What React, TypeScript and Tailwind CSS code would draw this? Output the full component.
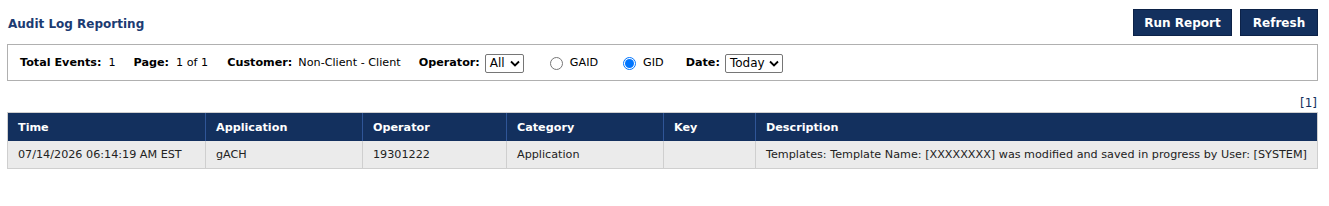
import React from "react";

const cols = [
  { name: "Time", w: "w-[197px]" },
  { name: "Application", w: "w-[157px]" },
  { name: "Operator", w: "w-[144px]" },
  { name: "Category", w: "w-[157px]" },
  { name: "Key", w: "w-[92px]" },
  { name: "Description", w: "" },
];

const row = [
  "07/14/2026 06:14:19 AM EST",
  "gACH",
  "19301222",
  "Application",
  "",
  "Templates: Template Name: [XXXXXXXX] was modified and saved in progress by User: [SYSTEM]",
];

function Select({ value, w }: { value: string; w: string }) {
  return (
    <div className={`flex items-center justify-between h-[19px] border border-[#767676] rounded-[2px] bg-white pl-[4px] pr-[3px] ${w}`}>
      <span className="text-[12px] text-black leading-none">{value}</span>
      <svg width="10" height="7" viewBox="0 0 10 7">
        <path d="M1 1.5 L5 5.5 L9 1.5" fill="none" stroke="#000" strokeWidth="1.8" />
      </svg>
    </div>
  );
}

function Radio({ checked }: { checked: boolean }) {
  return checked ? (
    <span className="inline-flex w-[13px] h-[13px] rounded-full border border-[#0075ff] items-center justify-center bg-white">
      <span className="w-[9px] h-[9px] rounded-full bg-[#0075ff]" />
    </span>
  ) : (
    <span className="inline-block w-[13px] h-[13px] rounded-full border border-[#767676] bg-white" />
  );
}

export default function App() {
  return (
    <div className="w-[1329px] h-[206px] bg-white text-[11.2px] text-[#222] font-['DejaVu_Sans',Verdana,sans-serif]">
      <div className="flex items-start justify-between pl-[8px] pr-[11px] pt-[9px]">
        <h1 className="text-[12px] font-bold text-[#1c3b72] mt-[6px]">Audit Log Reporting</h1>
        <div className="flex gap-[8px]">
          <button className="h-[27px] w-[99px] bg-[#13305e] text-white font-bold text-[12px] border border-[#0c2248]">Run Report</button>
          <button className="h-[27px] w-[78px] bg-[#13305e] text-white font-bold text-[12px] border border-[#0c2248]">Refresh</button>
        </div>
      </div>
      <div className="mx-[7px] mr-[11px] mt-[8px] h-[37px] border border-[#b0b0b0] flex items-center pl-[12px] pt-[1px] text-black">
        <span className="font-bold">Total Events:</span>
        <span className="ml-[7px]">1</span>
        <span className="font-bold ml-[18px]">Page:</span>
        <span className="ml-[7px]">1 of 1</span>
        <span className="font-bold ml-[19px]">Customer:</span>
        <span className="ml-[6px]">Non-Client - Client</span>
        <span className="font-bold ml-[18px]">Operator:</span>
        <span className="ml-[5px]"><Select value="All" w="w-[39px]" /></span>
        <span className="ml-[26px] flex items-center"><Radio checked={false} /></span>
        <span className="ml-[7px]">GAID</span>
        <span className="ml-[25px] flex items-center"><Radio checked={true} /></span>
        <span className="ml-[7px]">GID</span>
        <span className="font-bold ml-[22px]">Date:</span>
        <span className="ml-[5px]"><Select value="Today" w="w-[58px]" /></span>
      </div>
      <div className="mx-[7px] mr-[11px] mt-[15px]">
        <div className="text-right text-[#13305e] text-[12px] leading-[14px] pr-[1px]">[1]</div>
        <div className="mt-[2px] border border-[#cfcfcf]">
          <div className="flex bg-[#13305e] h-[28px] text-white font-bold">
            {cols.map((c, i) => (
              <div key={i} className={`${c.w} ${c.w ? "shrink-0" : "flex-1"} ${i > 0 ? "border-l border-[#2f5597]" : ""} flex items-center pl-[10px] pt-[2px]`}>
                {c.name}
              </div>
            ))}
          </div>
          <div className="flex bg-[#ebebeb] h-[27px] text-[#222]">
            {row.map((t, i) => (
              <div key={i} className={`${cols[i].w} ${cols[i].w ? "shrink-0" : "flex-1"} ${i > 0 ? "border-l border-[#cfcfcf]" : ""} flex items-center pl-[10px] pt-[2px] whitespace-nowrap overflow-hidden`}>
                {t}
              </div>
            ))}
          </div>
        </div>
      </div>
    </div>
  );
}
